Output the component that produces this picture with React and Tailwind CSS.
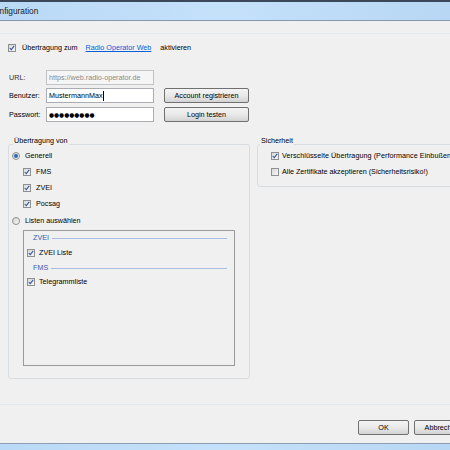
import React from 'react'

function Check({ checked = true }) {
  return (
    <span className="w-[8px] h-[8px] shrink-0 border border-[#8e8f8f] bg-linear-to-br from-[#d8d8d8] to-[#f7f7f7] flex items-center justify-center">
      {checked && (
        <svg width="6" height="6" viewBox="0 0 6 6">
          <path d="M0.8 3.1 L2.3 4.7 L5.2 0.9" fill="none" stroke="#3b5aa8" strokeWidth="1.1" />
        </svg>
      )}
    </span>
  )
}

function Radio({ checked = false }) {
  return (
    <span className="w-[8px] h-[8px] shrink-0 rounded-full border border-[#8e8f8f] bg-linear-to-br from-[#d4d4d4] to-[#f8f8f8] flex items-center justify-center">
      {checked && <span className="w-[4px] h-[4px] rounded-full bg-[#2a6bb5]" />}
    </span>
  )
}

function Button({ children, w }) {
  return (
    <div
      className={`${w} h-[15px] shrink-0 rounded-[2px] border border-[#707070] bg-linear-to-b from-[#f4f4f4] via-[#e9e9e9] to-[#d3d3d3] flex items-center justify-center`}
    >
      {children}
    </div>
  )
}

export default function App() {
  return (
    <div className="w-[450px] h-[450px] overflow-hidden bg-[#f0f0f0] flex flex-col text-[7.2px] leading-[8px] text-black font-['Liberation_Sans',Arial,sans-serif]">
      {/* Titelleiste */}
      <div className="h-[21px] shrink-0 border-t-2 border-t-[#3c4859] border-b border-b-[#8798ae] bg-linear-to-r from-[#b9d9f6] via-[#c5e1fa] to-[#b7d7f4] flex items-center overflow-hidden">
        <span className="ml-[-11px] text-[8.3px] text-[#1a1a1a]">Configuration</span>
      </div>

      <div className="mt-[12px] h-[1px] bg-[#e3e9f0]" />

      {/* Aktivieren */}
      <div className="mt-[8px] h-[12px] flex items-center pl-[8px]">
        <Check />
        <span className="ml-[6px]">Übertragung zum</span>
        <span className="ml-[8px] text-[#0b5fd6] underline">Radio Operator Web</span>
        <span className="ml-[9px]">aktivieren</span>
      </div>

      {/* Zugangsdaten */}
      <div className="mt-[16px] flex items-center pl-[9px] h-[15px]">
        <span className="w-[37px] text-[#333]">URL:</span>
        <div className="w-[108px] h-[15px] border border-[#c2c4c8] bg-[#f5f5f5] flex items-center pl-[2px] text-[#8a8a8a]">
          https://web.radio-operator.de
        </div>
      </div>
      <div className="mt-[3px] flex items-center pl-[9px] h-[15px]">
        <span className="w-[37px]">Benutzer:</span>
        <div className="w-[108px] h-[15px] border border-[#abadb3] bg-white flex items-center pl-[2px]">
          MustermannMax
          <span className="h-[10px] border-l border-black" />
        </div>
        <div className="ml-[10px]">
          <Button w="w-[85px]">Account registrieren</Button>
        </div>
      </div>
      <div className="mt-[4px] flex items-center pl-[9px] h-[15px]">
        <span className="w-[37px]">Passwort:</span>
        <div className="w-[108px] h-[15px] border border-[#abadb3] bg-white flex items-center pl-[2px] text-[5.8px] font-['DejaVu_Sans',sans-serif]">
          ●●●●●●●●●
        </div>
        <div className="ml-[10px]">
          <Button w="w-[85px]">Login testen</Button>
        </div>
      </div>

      {/* Gruppen */}
      <div className="mt-[15px] flex items-start">
        <fieldset className="ml-[8px] w-[242px] h-[242px] shrink-0 border border-[#d8dde2] rounded-[3px]">
          <legend className="ml-[4px] px-[1px] pb-[6px] leading-[8px]">Übertragung von</legend>

          <div className="h-[10px] flex items-center pl-[3px]">
            <Radio checked />
            <span className="ml-[5px]">Generell</span>
          </div>
          {['FMS', 'ZVEI', 'Pocsag'].map((t) => (
            <div key={t} className="mt-[6px] h-[10px] flex items-center pl-[14px]">
              <Check />
              <span className="ml-[5px]">{t}</span>
            </div>
          ))}
          <div className="mt-[7px] h-[10px] flex items-center pl-[3px]">
            <Radio />
            <span className="ml-[5px]">Listen auswählen</span>
          </div>

          <div className="mt-[4px] ml-[14px] w-[212px] h-[136px] border border-[#9a9a9a]">
            <div className="mt-[2px] h-[10px] flex items-center pl-[9px] pr-[7px]">
              <span className="text-[#3559b8]">ZVEI</span>
              <span className="ml-[3px] flex-1 h-[1px] bg-[#aabde4]" />
            </div>
            <div className="mt-[5px] h-[10px] flex items-center pl-[3px]">
              <Check />
              <span className="ml-[4px]">ZVEI Liste</span>
            </div>
            <div className="mt-[5px] h-[10px] flex items-center pl-[9px] pr-[7px]">
              <span className="text-[#3559b8]">FMS</span>
              <span className="ml-[3px] flex-1 h-[1px] bg-[#aabde4]" />
            </div>
            <div className="mt-[4px] h-[10px] flex items-center pl-[3px]">
              <Check />
              <span className="ml-[4px]">Telegrammliste</span>
            </div>
          </div>
        </fieldset>

        <fieldset className="ml-[7px] w-[210px] h-[50px] shrink-0 border border-[#d8dde2] rounded-[3px]">
          <legend className="ml-[2px] px-[1px] pb-[6px] leading-[8px]">Sicherheit</legend>
          <div className="h-[10px] flex items-center pl-[13px] whitespace-nowrap">
            <Check />
            <span className="ml-[3px] tracking-[0.05px]">Verschlüsselte Übertragung (Performance Einbußen)</span>
          </div>
          <div className="mt-[6px] h-[10px] flex items-center pl-[13px] whitespace-nowrap">
            <Check checked={false} />
            <span className="ml-[3px]">Alle Zertifikate akzeptieren (Sicherheitsrisiko!)</span>
          </div>
        </fieldset>
      </div>

      <div className="mt-[25px] h-[1px] bg-[#e3e9f0]" />

      {/* Schaltflächen */}
      <div className="mt-[15px] flex items-center pl-[358px] gap-[5px]">
        <Button w="w-[51px]">OK</Button>
        <Button w="w-[56px]">Abbrechen</Button>
      </div>

      <div className="mt-auto h-[7px] shrink-0 border-t border-t-[#8a9db4] bg-linear-to-r from-[#b9d9f6] via-[#c5e1fa] to-[#b7d7f4]" />
    </div>
  )
}
